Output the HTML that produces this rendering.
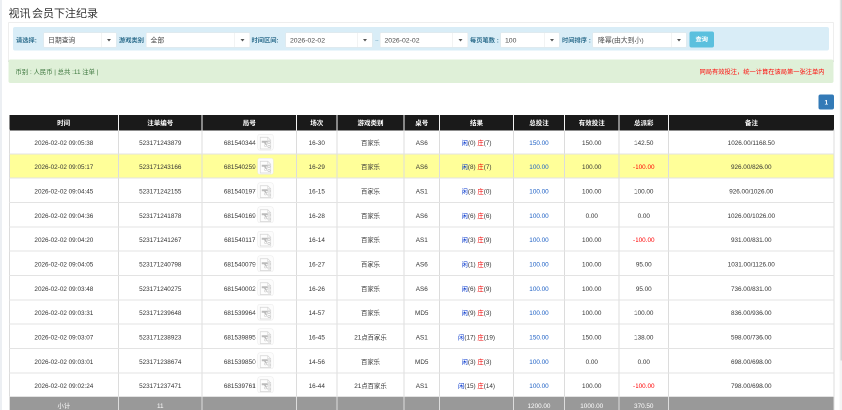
<!DOCTYPE html>
<html lang="zh-CN"><head><meta charset="utf-8"><title>视讯 会员下注纪录</title>
<style>
html,body{margin:0;padding:0;background:#fff;overflow:hidden;}
body{width:842px;height:410px;position:relative;}
#s{position:absolute;left:0;top:0;width:1684px;height:820px;transform:scale(.5);transform-origin:0 0;will-change:transform;background:#fff;font-family:"Liberation Sans","Noto Sans CJK SC",sans-serif;font-size:13px;color:#333;overflow:hidden;}
.lb{position:absolute;left:0;top:0;width:3.5px;height:820px;background:#eceff3;}
.rb{position:absolute;left:1678.5px;top:0;width:5.5px;height:820px;background:#f4f4f4;}
.rb b{position:absolute;left:2.5px;top:0;width:3px;height:721px;background:#d6d6d6;}
h3{position:absolute;left:17px;top:10px;margin:0;font-size:22px;font-weight:400;line-height:34px;color:#333;word-spacing:-3px;}
.panel{position:absolute;left:16px;top:44px;width:1652px;height:80px;border:1px solid #ddd;border-bottom:0;border-radius:4px 4px 0 0;box-sizing:border-box;}
.info{position:absolute;left:26px;top:54px;width:1632px;height:47px;background:#d9edf7;border-radius:4px;}
.succ{position:absolute;left:17px;top:118.5px;width:1650px;height:47px;background:#dff0d8;border-radius:4px;}
.lab{position:absolute;top:3.5px;height:46px;line-height:46px;font-size:12.5px;font-weight:700;color:#31708f;white-space:nowrap;}
.sel{position:absolute;top:11px;height:30px;background:#fff;border:1px solid #e5e6e7;box-sizing:border-box;border-radius:2px;line-height:29px;font-size:13.7px;color:#4a4a4a;padding-left:8px;white-space:nowrap;}
.sel i{position:absolute;right:0;top:0;width:29px;height:28px;border-left:1px solid #e5e6e7;}
.sel i:after{content:"";position:absolute;left:11px;top:12px;border:4px solid transparent;border-top:5px solid #555;}
.btn{position:absolute;left:1353px;top:9px;width:49px;height:31.5px;background:#5bc0de;border-radius:4px;color:#fff;font-size:12.5px;font-weight:700;line-height:32px;text-align:center;}
.succ .l{position:absolute;left:14px;top:2px;line-height:47px;font-size:12.7px;color:#3c763d;}
.succ .rr{position:absolute;right:18px;top:2px;line-height:47px;font-size:12.5px;color:#f00;}
.pg{position:absolute;left:1637px;top:189px;width:31px;height:30px;background:#337ab7;border-radius:4px;color:#fff;font-size:13px;font-weight:700;line-height:31px;text-align:center;}
table{position:absolute;left:17.5px;top:230px;width:1649.5px;border-collapse:collapse;table-layout:fixed;}
th{background:#1a1a1a;color:#fff;font-weight:700;line-height:15px;font-size:13px;height:28px;padding:1px 0 0 0;border-left:2px solid #f4f4f4;text-align:center;}
th:first-child{border-left:0;}
td{height:48.67px;padding:6px 0 0 0;line-height:15px;text-align:center;font-size:12.7px;color:#333;border:2px solid #dcdcdc;border-top-color:#e3e3e3;border-bottom-color:#e3e3e3;box-sizing:border-box;white-space:nowrap;}
tr.hl td{background:#ffff99;}
.b{color:#0033cc;} td.b{color:#1c5fc4;}
.r{color:#e00;} td.neg{color:#f00;}
td.ju span{display:inline-block;vertical-align:middle;margin-right:4px;margin-left:-2px;}
tbody tr:first-child td{border-top-color:#1a1a1a;height:47.6px;}
.ic{vertical-align:middle;position:relative;top:-2.5px;}
tbody tr:last-child td{height:47.5px;}
tfoot td{background:#999;color:#fff;height:35px;padding-top:3px;border:2px solid #999;border-left:2px solid #ddd;border-right:2px solid #ddd;}
</style></head><body><div id="s">
<div class="lb"></div><div class="rb"><b></b></div>
<h3>视讯 会员下注纪录</h3>
<div class="panel"></div>
<div class="info">
 <span class="lab" style="left:6px">请选择:</span>
 <div class="sel" style="left:61px;width:146px">日期查询<i></i></div>
 <span class="lab" style="left:212px">游戏类别</span>
 <div class="sel" style="left:266px;width:207.5px">全部<i></i></div>
 <span class="lab" style="left:477px">时间区间:</span>
 <div class="sel" style="left:545px;width:174px">2026-02-02<i></i></div>
 <span class="lab" style="left:724px;font-weight:400;color:#7fb0c8">~</span>
 <div class="sel" style="left:734px;width:176px">2026-02-02<i></i></div>
 <span class="lab" style="left:914px">每页笔数 :</span>
 <div class="sel" style="left:975px;width:118px">100<i></i></div>
 <span class="lab" style="left:1098px">时间排序 :</span>
 <div class="sel" style="left:1159px;width:188px;padding-left:10px">降幂(由大到小)<i></i></div>
 <div class="btn">查询</div>
</div>
<div class="succ"><span class="l">币别 : 人民币 | 总共 :11 注单 |</span><span class="rr">同局有效投注，统一计算在该局第一张注单内</span></div>
<div class="pg">1</div>
<table>
<colgroup><col style="width:218.5px"><col style="width:167px"><col style="width:189px"><col style="width:81px"><col style="width:134px"><col style="width:71px"><col style="width:148px"><col style="width:102px"><col style="width:109px"><col style="width:99px"><col style="width:331px"></colgroup>
<thead><tr><th>时间</th><th>注单编号</th><th>局号</th><th>场次</th><th>游戏类别</th><th>桌号</th><th>结果</th><th>总投注</th><th>有效投注</th><th>总派彩</th><th>备注</th></tr></thead>
<tbody>
<tr><td>2026-02-02 09:05:38</td><td>523171243879</td><td class="ju"><span>681540344</span><svg class="ic" width="32" height="33" viewBox="0 0 32 33"><rect x="0.5" y="0.5" width="31" height="32" rx="4" fill="#fcfcfc" stroke="#e8e8e8"/><path d="M5.5 6.500h15l6 6v17.500h-21z" fill="#fdfdfd" stroke="#d4d4d4" stroke-width="1.3"/><path d="M20.500 6.500v6h6" fill="none" stroke="#d4d4d4" stroke-width="1.3"/><path d="M8.500 13.500h12v3.500h-4l3 4.500h-4l-2.500-4h-4.500z" fill="#bbb"/><circle cx="23" cy="17" r="2.300" fill="none" stroke="#c6c6c6" stroke-width="1.200"/><circle cx="23" cy="25" r="2.300" fill="none" stroke="#c6c6c6" stroke-width="1.200"/><circle cx="16" cy="23" r="2" fill="none" stroke="#cdcdcd" stroke-width="1.200"/><path d="M17.800 22.200l3.300-3.800M17.800 23.800l3.300 1" stroke="#cdcdcd" stroke-width="1.200"/></svg></td><td>16-30</td><td>百家乐</td><td>AS6</td><td><span class="b">闲</span>(0) <span class="r">庄</span>(7)</td><td class="b">150.00</td><td>150.00</td><td>142.50</td><td>1026.00/1168.50</td></tr>
<tr class="hl"><td>2026-02-02 09:05:17</td><td>523171243166</td><td class="ju"><span>681540259</span><svg class="ic" width="32" height="33" viewBox="0 0 32 33"><rect x="0.5" y="0.5" width="31" height="32" rx="4" fill="#fcfcfc" stroke="#e8e8e8"/><path d="M5.5 6.500h15l6 6v17.500h-21z" fill="#fdfdfd" stroke="#d4d4d4" stroke-width="1.3"/><path d="M20.500 6.500v6h6" fill="none" stroke="#d4d4d4" stroke-width="1.3"/><path d="M8.500 13.500h12v3.500h-4l3 4.500h-4l-2.500-4h-4.500z" fill="#bbb"/><circle cx="23" cy="17" r="2.300" fill="none" stroke="#c6c6c6" stroke-width="1.200"/><circle cx="23" cy="25" r="2.300" fill="none" stroke="#c6c6c6" stroke-width="1.200"/><circle cx="16" cy="23" r="2" fill="none" stroke="#cdcdcd" stroke-width="1.200"/><path d="M17.800 22.200l3.300-3.800M17.800 23.800l3.300 1" stroke="#cdcdcd" stroke-width="1.200"/></svg></td><td>16-29</td><td>百家乐</td><td>AS6</td><td><span class="b">闲</span>(8) <span class="r">庄</span>(7)</td><td class="b">100.00</td><td>100.00</td><td class="neg">-100.00</td><td>926.00/826.00</td></tr>
<tr><td>2026-02-02 09:04:45</td><td>523171242155</td><td class="ju"><span>681540197</span><svg class="ic" width="32" height="33" viewBox="0 0 32 33"><rect x="0.5" y="0.5" width="31" height="32" rx="4" fill="#fcfcfc" stroke="#e8e8e8"/><path d="M5.5 6.500h15l6 6v17.500h-21z" fill="#fdfdfd" stroke="#d4d4d4" stroke-width="1.3"/><path d="M20.500 6.500v6h6" fill="none" stroke="#d4d4d4" stroke-width="1.3"/><path d="M8.500 13.500h12v3.500h-4l3 4.500h-4l-2.500-4h-4.500z" fill="#bbb"/><circle cx="23" cy="17" r="2.300" fill="none" stroke="#c6c6c6" stroke-width="1.200"/><circle cx="23" cy="25" r="2.300" fill="none" stroke="#c6c6c6" stroke-width="1.200"/><circle cx="16" cy="23" r="2" fill="none" stroke="#cdcdcd" stroke-width="1.200"/><path d="M17.800 22.200l3.300-3.800M17.800 23.800l3.300 1" stroke="#cdcdcd" stroke-width="1.200"/></svg></td><td>16-15</td><td>百家乐</td><td>AS1</td><td><span class="b">闲</span>(3) <span class="r">庄</span>(0)</td><td class="b">100.00</td><td>100.00</td><td>100.00</td><td>926.00/1026.00</td></tr>
<tr><td>2026-02-02 09:04:36</td><td>523171241878</td><td class="ju"><span>681540169</span><svg class="ic" width="32" height="33" viewBox="0 0 32 33"><rect x="0.5" y="0.5" width="31" height="32" rx="4" fill="#fcfcfc" stroke="#e8e8e8"/><path d="M5.5 6.500h15l6 6v17.500h-21z" fill="#fdfdfd" stroke="#d4d4d4" stroke-width="1.3"/><path d="M20.500 6.500v6h6" fill="none" stroke="#d4d4d4" stroke-width="1.3"/><path d="M8.500 13.500h12v3.500h-4l3 4.500h-4l-2.500-4h-4.500z" fill="#bbb"/><circle cx="23" cy="17" r="2.300" fill="none" stroke="#c6c6c6" stroke-width="1.200"/><circle cx="23" cy="25" r="2.300" fill="none" stroke="#c6c6c6" stroke-width="1.200"/><circle cx="16" cy="23" r="2" fill="none" stroke="#cdcdcd" stroke-width="1.200"/><path d="M17.800 22.200l3.300-3.800M17.800 23.800l3.300 1" stroke="#cdcdcd" stroke-width="1.200"/></svg></td><td>16-28</td><td>百家乐</td><td>AS6</td><td><span class="b">闲</span>(6) <span class="r">庄</span>(6)</td><td class="b">100.00</td><td>0.00</td><td>0.00</td><td>1026.00/1026.00</td></tr>
<tr><td>2026-02-02 09:04:20</td><td>523171241267</td><td class="ju"><span>681540117</span><svg class="ic" width="32" height="33" viewBox="0 0 32 33"><rect x="0.5" y="0.5" width="31" height="32" rx="4" fill="#fcfcfc" stroke="#e8e8e8"/><path d="M5.5 6.500h15l6 6v17.500h-21z" fill="#fdfdfd" stroke="#d4d4d4" stroke-width="1.3"/><path d="M20.500 6.500v6h6" fill="none" stroke="#d4d4d4" stroke-width="1.3"/><path d="M8.500 13.500h12v3.500h-4l3 4.500h-4l-2.500-4h-4.500z" fill="#bbb"/><circle cx="23" cy="17" r="2.300" fill="none" stroke="#c6c6c6" stroke-width="1.200"/><circle cx="23" cy="25" r="2.300" fill="none" stroke="#c6c6c6" stroke-width="1.200"/><circle cx="16" cy="23" r="2" fill="none" stroke="#cdcdcd" stroke-width="1.200"/><path d="M17.800 22.200l3.300-3.800M17.800 23.800l3.300 1" stroke="#cdcdcd" stroke-width="1.200"/></svg></td><td>16-14</td><td>百家乐</td><td>AS1</td><td><span class="b">闲</span>(3) <span class="r">庄</span>(9)</td><td class="b">100.00</td><td>100.00</td><td class="neg">-100.00</td><td>931.00/831.00</td></tr>
<tr><td>2026-02-02 09:04:05</td><td>523171240798</td><td class="ju"><span>681540079</span><svg class="ic" width="32" height="33" viewBox="0 0 32 33"><rect x="0.5" y="0.5" width="31" height="32" rx="4" fill="#fcfcfc" stroke="#e8e8e8"/><path d="M5.5 6.500h15l6 6v17.500h-21z" fill="#fdfdfd" stroke="#d4d4d4" stroke-width="1.3"/><path d="M20.500 6.500v6h6" fill="none" stroke="#d4d4d4" stroke-width="1.3"/><path d="M8.500 13.500h12v3.500h-4l3 4.500h-4l-2.500-4h-4.500z" fill="#bbb"/><circle cx="23" cy="17" r="2.300" fill="none" stroke="#c6c6c6" stroke-width="1.200"/><circle cx="23" cy="25" r="2.300" fill="none" stroke="#c6c6c6" stroke-width="1.200"/><circle cx="16" cy="23" r="2" fill="none" stroke="#cdcdcd" stroke-width="1.200"/><path d="M17.800 22.200l3.300-3.800M17.800 23.800l3.300 1" stroke="#cdcdcd" stroke-width="1.200"/></svg></td><td>16-27</td><td>百家乐</td><td>AS6</td><td><span class="b">闲</span>(1) <span class="r">庄</span>(9)</td><td class="b">100.00</td><td>100.00</td><td>95.00</td><td>1031.00/1126.00</td></tr>
<tr><td>2026-02-02 09:03:48</td><td>523171240275</td><td class="ju"><span>681540002</span><svg class="ic" width="32" height="33" viewBox="0 0 32 33"><rect x="0.5" y="0.5" width="31" height="32" rx="4" fill="#fcfcfc" stroke="#e8e8e8"/><path d="M5.5 6.500h15l6 6v17.500h-21z" fill="#fdfdfd" stroke="#d4d4d4" stroke-width="1.3"/><path d="M20.500 6.500v6h6" fill="none" stroke="#d4d4d4" stroke-width="1.3"/><path d="M8.500 13.500h12v3.500h-4l3 4.500h-4l-2.500-4h-4.500z" fill="#bbb"/><circle cx="23" cy="17" r="2.300" fill="none" stroke="#c6c6c6" stroke-width="1.200"/><circle cx="23" cy="25" r="2.300" fill="none" stroke="#c6c6c6" stroke-width="1.200"/><circle cx="16" cy="23" r="2" fill="none" stroke="#cdcdcd" stroke-width="1.200"/><path d="M17.800 22.200l3.300-3.800M17.800 23.800l3.300 1" stroke="#cdcdcd" stroke-width="1.200"/></svg></td><td>16-26</td><td>百家乐</td><td>AS6</td><td><span class="b">闲</span>(6) <span class="r">庄</span>(9)</td><td class="b">100.00</td><td>100.00</td><td>95.00</td><td>736.00/831.00</td></tr>
<tr><td>2026-02-02 09:03:31</td><td>523171239648</td><td class="ju"><span>681539964</span><svg class="ic" width="32" height="33" viewBox="0 0 32 33"><rect x="0.5" y="0.5" width="31" height="32" rx="4" fill="#fcfcfc" stroke="#e8e8e8"/><path d="M5.5 6.500h15l6 6v17.500h-21z" fill="#fdfdfd" stroke="#d4d4d4" stroke-width="1.3"/><path d="M20.500 6.500v6h6" fill="none" stroke="#d4d4d4" stroke-width="1.3"/><path d="M8.500 13.500h12v3.500h-4l3 4.500h-4l-2.500-4h-4.500z" fill="#bbb"/><circle cx="23" cy="17" r="2.300" fill="none" stroke="#c6c6c6" stroke-width="1.200"/><circle cx="23" cy="25" r="2.300" fill="none" stroke="#c6c6c6" stroke-width="1.200"/><circle cx="16" cy="23" r="2" fill="none" stroke="#cdcdcd" stroke-width="1.200"/><path d="M17.800 22.200l3.300-3.800M17.800 23.800l3.300 1" stroke="#cdcdcd" stroke-width="1.200"/></svg></td><td>14-57</td><td>百家乐</td><td>MD5</td><td><span class="b">闲</span>(9) <span class="r">庄</span>(3)</td><td class="b">100.00</td><td>100.00</td><td>100.00</td><td>836.00/936.00</td></tr>
<tr><td>2026-02-02 09:03:07</td><td>523171238923</td><td class="ju"><span>681539895</span><svg class="ic" width="32" height="33" viewBox="0 0 32 33"><rect x="0.5" y="0.5" width="31" height="32" rx="4" fill="#fcfcfc" stroke="#e8e8e8"/><path d="M5.5 6.500h15l6 6v17.500h-21z" fill="#fdfdfd" stroke="#d4d4d4" stroke-width="1.3"/><path d="M20.500 6.500v6h6" fill="none" stroke="#d4d4d4" stroke-width="1.3"/><path d="M8.500 13.500h12v3.500h-4l3 4.500h-4l-2.500-4h-4.500z" fill="#bbb"/><circle cx="23" cy="17" r="2.300" fill="none" stroke="#c6c6c6" stroke-width="1.200"/><circle cx="23" cy="25" r="2.300" fill="none" stroke="#c6c6c6" stroke-width="1.200"/><circle cx="16" cy="23" r="2" fill="none" stroke="#cdcdcd" stroke-width="1.200"/><path d="M17.800 22.200l3.300-3.800M17.800 23.800l3.300 1" stroke="#cdcdcd" stroke-width="1.200"/></svg></td><td>16-45</td><td>21点百家乐</td><td>AS1</td><td><span class="b">闲</span>(17) <span class="r">庄</span>(19)</td><td class="b">150.00</td><td>150.00</td><td>138.00</td><td>598.00/736.00</td></tr>
<tr><td>2026-02-02 09:03:01</td><td>523171238674</td><td class="ju"><span>681539850</span><svg class="ic" width="32" height="33" viewBox="0 0 32 33"><rect x="0.5" y="0.5" width="31" height="32" rx="4" fill="#fcfcfc" stroke="#e8e8e8"/><path d="M5.5 6.500h15l6 6v17.500h-21z" fill="#fdfdfd" stroke="#d4d4d4" stroke-width="1.3"/><path d="M20.500 6.500v6h6" fill="none" stroke="#d4d4d4" stroke-width="1.3"/><path d="M8.500 13.500h12v3.500h-4l3 4.500h-4l-2.500-4h-4.500z" fill="#bbb"/><circle cx="23" cy="17" r="2.300" fill="none" stroke="#c6c6c6" stroke-width="1.200"/><circle cx="23" cy="25" r="2.300" fill="none" stroke="#c6c6c6" stroke-width="1.200"/><circle cx="16" cy="23" r="2" fill="none" stroke="#cdcdcd" stroke-width="1.200"/><path d="M17.800 22.200l3.300-3.800M17.800 23.800l3.300 1" stroke="#cdcdcd" stroke-width="1.200"/></svg></td><td>14-56</td><td>百家乐</td><td>MD5</td><td><span class="b">闲</span>(3) <span class="r">庄</span>(3)</td><td class="b">100.00</td><td>0.00</td><td>0.00</td><td>698.00/698.00</td></tr>
<tr><td>2026-02-02 09:02:24</td><td>523171237471</td><td class="ju"><span>681539761</span><svg class="ic" width="32" height="33" viewBox="0 0 32 33"><rect x="0.5" y="0.5" width="31" height="32" rx="4" fill="#fcfcfc" stroke="#e8e8e8"/><path d="M5.5 6.500h15l6 6v17.500h-21z" fill="#fdfdfd" stroke="#d4d4d4" stroke-width="1.3"/><path d="M20.500 6.500v6h6" fill="none" stroke="#d4d4d4" stroke-width="1.3"/><path d="M8.500 13.500h12v3.500h-4l3 4.500h-4l-2.500-4h-4.500z" fill="#bbb"/><circle cx="23" cy="17" r="2.300" fill="none" stroke="#c6c6c6" stroke-width="1.200"/><circle cx="23" cy="25" r="2.300" fill="none" stroke="#c6c6c6" stroke-width="1.200"/><circle cx="16" cy="23" r="2" fill="none" stroke="#cdcdcd" stroke-width="1.200"/><path d="M17.800 22.200l3.300-3.800M17.800 23.800l3.300 1" stroke="#cdcdcd" stroke-width="1.200"/></svg></td><td>16-44</td><td>21点百家乐</td><td>AS1</td><td><span class="b">闲</span>(15) <span class="r">庄</span>(14)</td><td class="b">100.00</td><td>100.00</td><td class="neg">-100.00</td><td>798.00/698.00</td></tr>
</tbody>
<tfoot><tr><td>小计</td><td>11</td><td></td><td></td><td></td><td></td><td></td><td>1200.00</td><td>1000.00</td><td>370.50</td><td></td></tr></tfoot>
</table>
</div></body></html>
